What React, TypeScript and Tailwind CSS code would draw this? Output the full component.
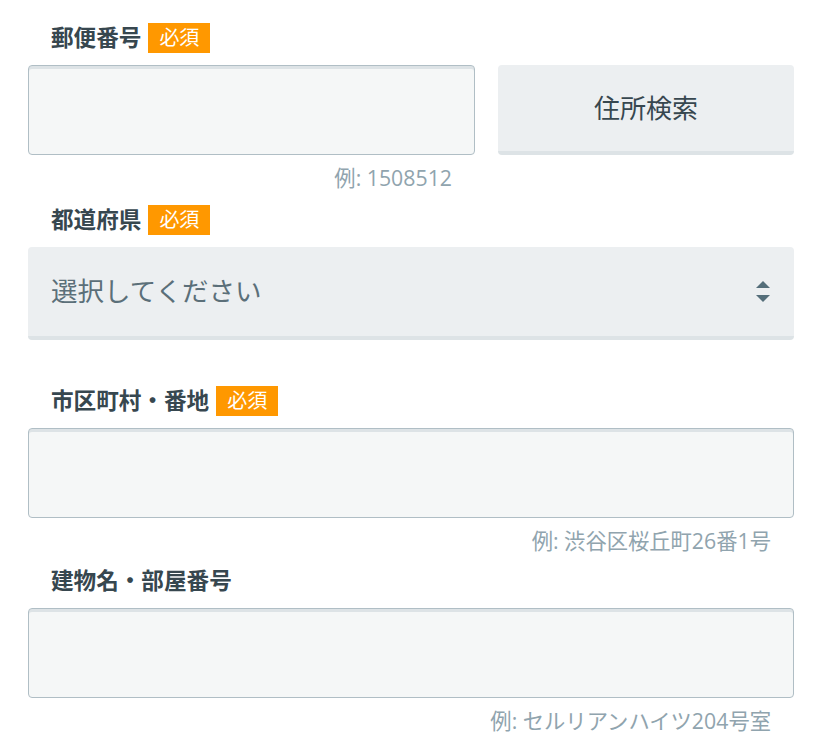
import React from "react";

const Badge = () => (
  <span className="inline-flex h-[30px] items-center bg-[#ff9800] px-[11px] text-[20px] leading-none text-white">
    必須
  </span>
);

const Label = ({ text, required }: { text: string; required?: boolean }) => (
  <div className="flex h-[30px] items-center gap-[7px] pl-[23px]">
    <span className="text-[22.6px] font-bold leading-none text-[#37474f]">{text}</span>
    {required && <Badge />}
  </div>
);

const TextInput = ({ className = "" }: { className?: string }) => (
  <input
    type="text"
    className={`h-[90px] rounded-[4px] border border-[#b0bec5] bg-[#f5f7f7] px-[23px] text-[26px] text-[#37474f] shadow-[inset_0_3px_0_#dde3e6] outline-none ${className}`}
  />
);

const Hint = ({ text }: { text: string }) => (
  <div className="mt-[7px] h-[32px] pr-[23px] text-right text-[21.3px] leading-[32px] text-[#90a4ae]">
    {text}
  </div>
);

export default function App() {
  return (
    <div className="min-h-[747px] w-[822px] bg-white px-[28px] pt-[23px] font-['Open_Sans','Noto_Sans_CJK_JP',sans-serif]">
      {/* 郵便番号 */}
      <Label text="郵便番号" required />
      <div className="mt-[12px] flex items-start gap-[23px]">
        <div className="flex w-[447px] flex-col">
          <TextInput className="w-full" />
          <Hint text="例: 1508512" />
        </div>
        <button
          type="button"
          className="h-[90px] flex-1 rounded-[4px] border-b-[4px] border-[#dde3e6] bg-[#eceff1] text-[26px] text-[#37474f]"
        >
          住所検索
        </button>
      </div>

      {/* 都道府県 */}
      <div className="mt-[11px]">
        <Label text="都道府県" required />
      </div>
      <div className="mt-[12px] flex h-[93px] items-center justify-between rounded-[4px] border-b-[4px] border-[#dde3e6] bg-[#eceff1] pl-[23px] pr-[24px]">
        <span className="text-[26.5px] text-[#5b6f79]">選択してください</span>
        <svg width="14" height="21" viewBox="0 0 14 21" className="text-[#546e7a]">
          <path d="M7 0 L14 7 L0 7 Z" fill="currentColor" />
          <path d="M0 14 L14 14 L7 21 Z" fill="currentColor" />
        </svg>
      </div>

      {/* 市区町村・番地 */}
      <div className="mt-[46px]">
        <Label text="市区町村・番地" required />
      </div>
      <div className="mt-[12px] flex flex-col">
        <TextInput className="w-full" />
        <Hint text="例: 渋谷区桜丘町26番1号" />
      </div>

      {/* 建物名・部屋番号 */}
      <div className="mt-[9px]">
        <Label text="建物名・部屋番号" />
      </div>
      <div className="mt-[12px] flex flex-col">
        <TextInput className="w-full" />
        <Hint text="例: セルリアンハイツ204号室" />
      </div>
    </div>
  );
}
